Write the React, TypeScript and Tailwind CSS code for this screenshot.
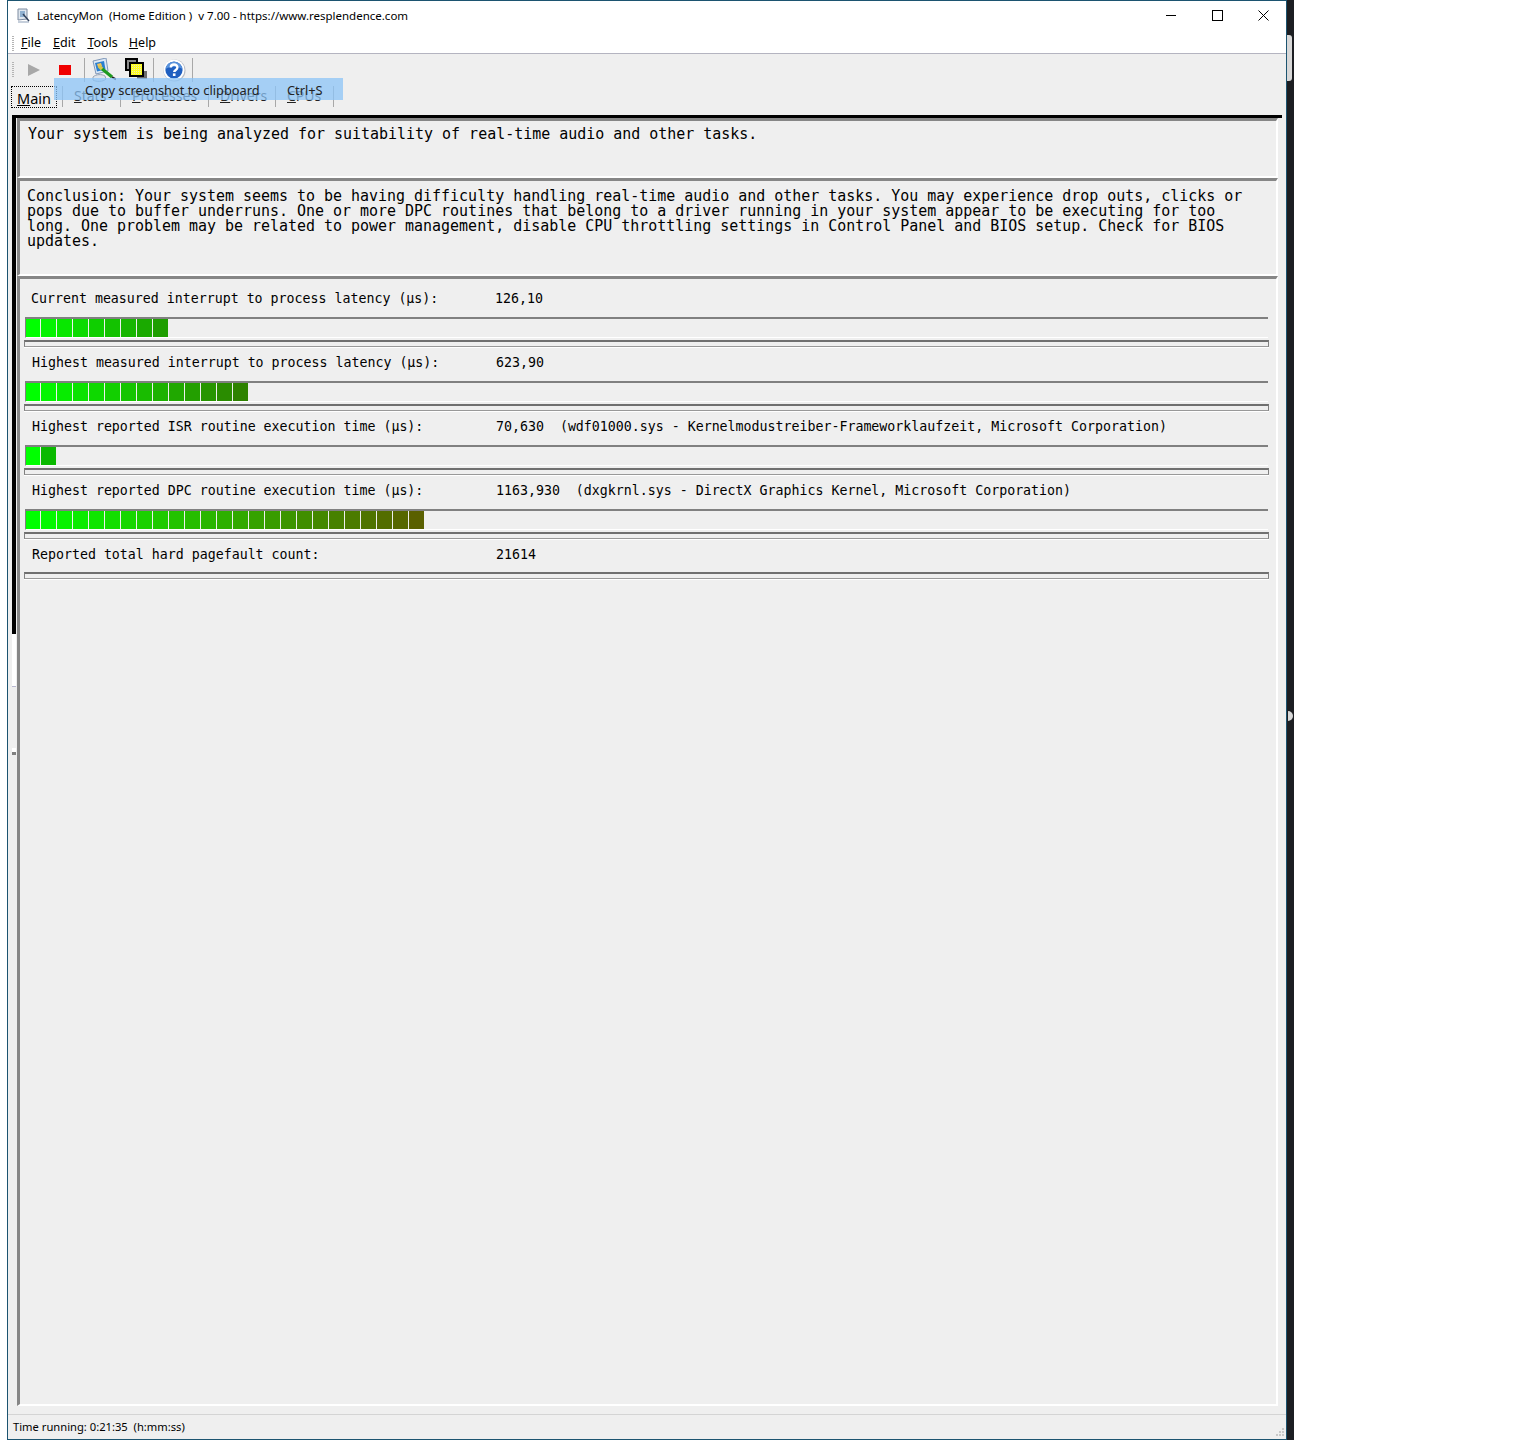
const uiFont = "font-['Noto_Sans',sans-serif]";
const monoFont = "font-['DejaVu_Sans_Mono',monospace]";

const rows = [
  { label: "Current measured interrupt to process latency (µs):", value: "126,10", count: 9, end: [30, 158], indent: "pl-[7px]" },
  { label: "Highest measured interrupt to process latency (µs):", value: "623,90", count: 14, end: [46, 130], indent: "pl-[8px]" },
  { label: "Highest reported ISR routine execution time (µs):", value: "70,630  (wdf01000.sys - Kernelmodustreiber-Frameworklaufzeit, Microsoft Corporation)", count: 2, end: [10, 185], indent: "pl-[8px]" },
  { label: "Highest reported DPC routine execution time (µs):", value: "1163,930  (dxgkrnl.sys - DirectX Graphics Kernel, Microsoft Corporation)", count: 25, end: [90, 96], indent: "pl-[8px]" },
];

function AppIcon() {
  return (
    <svg width="16" height="16" viewBox="0 0 16 16">
      <path d="M2 1l9 0 0 10-9 1z" fill="#dfe6ee" stroke="#7d8ba0" />
      <rect x="4" y="3" width="5" height="6" fill="#8fb0d0" />
      <path d="M2 13h11v2H2z" fill="#c6cfdb" />
      <path d="M7 6l6 7" stroke="#33425c" strokeWidth="1.5" />
    </svg>
  );
}

function Gripper() {
  return (
    <div className="flex flex-col gap-[1px] w-[2px] shrink-0">
      {Array.from({ length: 8 }).map((_, i) => (
        <div key={i} className="w-[2px] h-[1px] bg-[#b4b4b4]" />
      ))}
    </div>
  );
}

function ScreenshotIcon() {
  return (
    <svg width="24" height="24" viewBox="0 0 24 24">
      <path d="M1 3l13-3 2 13-12 3z" fill="#dce8f6" stroke="#7f97b8" />
      <path d="M3 5l9-2 1.5 8.5-8.500 2z" fill="#2a7fd0" />
      <path d="M5 6l4-1 1 3-4 1z" fill="#f2c45a" />
      <path d="M1 19c3-3 9-3 12-1l1 3c-3 3-10 3-13 1z" fill="#dde3ea" stroke="#98a3b2" />
      <path d="M9 10l11 9" stroke="#1e9a1e" strokeWidth="3.200" />
      <path d="M7 8l3 3" stroke="#d8c64a" strokeWidth="3.500" />
      <path d="M20 19l4 2.500" stroke="#222222" strokeWidth="2" />
    </svg>
  );
}

function CopyIcon() {
  return (
    <svg width="24" height="24" viewBox="0 0 24 24" shapeRendering="crispEdges">
      <rect x="12" y="13" width="10" height="8" fill="#6e6e6e" />
      <rect x="1" y="1" width="11" height="11" fill="#8a8a8a" stroke="#000000" strokeWidth="2" />
      <rect x="5" y="5" width="13" height="13" fill="#ffff20" stroke="#000000" strokeWidth="2" />
      <path d="M7 7h9M7 9h9M7 11h9M7 13h9M7 15h9" stroke="#e8e8b8" strokeDasharray="1 1" />
    </svg>
  );
}

function HelpIcon() {
  return (
    <svg width="24" height="24" viewBox="0 0 24 24">
      <circle cx="12.500" cy="12.500" r="11" fill="#b8bcc4" />
      <circle cx="12" cy="12" r="10.500" fill="#ffffff" />
      <circle cx="12" cy="12" r="8.600" fill="#1f5fc0" />
      <path d="M3.500 11a8.600 8.600 0 0 1 17 0c-5-3-12-3-17 0z" fill="#5a93dc" />
      <path d="M8.800 9.500c0-4 6.600-4 6.600 0 0 2.400-3.200 2.400-3.200 4.600" fill="none" stroke="#ffffff" strokeWidth="2.400" />
      <rect x="10.900" y="15.400" width="2.600" height="2.600" fill="#ffffff" />
    </svg>
  );
}

function WindowButtons() {
  return (
    <div className="ml-auto flex h-full">
      <div className="w-[46px] flex items-center justify-center">
        <svg width="11" height="11" viewBox="0 0 11 11" shapeRendering="crispEdges">
          <path d="M0 5.500h10" stroke="#000000" />
        </svg>
      </div>
      <div className="w-[46px] flex items-center justify-center">
        <svg width="11" height="11" viewBox="0 0 11 11" shapeRendering="crispEdges">
          <rect x="0.500" y="0.500" width="10" height="10" fill="none" stroke="#000000" />
        </svg>
      </div>
      <div className="w-[46px] flex items-center justify-center">
        <svg width="11" height="11" viewBox="0 0 11 11">
          <path d="M0.500 0.500l10 10M10.500 0.500l-10 10" stroke="#000000" />
        </svg>
      </div>
    </div>
  );
}

function ResizeGrip() {
  return (
    <svg width="10" height="10" viewBox="0 0 10 10" className="absolute right-[1px] bottom-[1px]">
      <path d="M7 0h2v2H7zM4 3h2v2H4zM7 3h2v2H7zM1 6h2v2H1zM4 6h2v2H4zM7 6h2v2H7z" fill="#c8c8c8" />
    </svg>
  );
}

function MeterBar({ count, end }: { count: number; end: number[] }) {
  return (
    <div className="ml-[1px] w-[1243px] h-[21px] border-t-2 border-l border-b border-t-[#808080] border-l-[#808080] border-b-white flex gap-[1px]">
      {Array.from({ length: count }).map((_, i) => {
        const t = count > 1 ? i / (count - 1) : 0;
        const r = Math.round(end[0] * t);
        const g = Math.round(255 + (end[1] - 255) * t);
        return <div key={i} className="w-[15px] first:w-[14px] h-[18px]" style={{ backgroundColor: `rgb(${r},${g},0)` }} />;
      })}
    </div>
  );
}

function EmptyBox() {
  return <div className="w-[1245px] h-[7px] border-t-2 border-x border-b border-t-[#707070] border-x-[#808080] border-b-[#999999] shadow-[0_1px_0_#ffffff]" />;
}

function MeterRow({ label, value, indent }: { label: string; value: string; indent: string }) {
  return (
    <div className={`${indent} h-[27px] pt-[1px] whitespace-pre text-[13.28px] leading-4 text-black`}>
      <span className="inline-block w-[464px]">{label}</span>
      {value}
    </div>
  );
}

export default function App() {
  return (
    <div className="flex w-[1536px] h-[1448px] bg-white overflow-hidden">
      <div className="w-[7px] shrink-0" />
      <div className={`relative w-[1280px] h-[1440px] shrink-0 flex flex-col border border-[#1c5470] bg-[#efefef] ${uiFont}`}>
        <div className="h-[31px] shrink-0 bg-white flex items-center text-[11.5px] text-black">
          <div className="ml-[8px] mr-[5px] mb-[2px]">
            <AppIcon />
          </div>
          <span className="whitespace-pre mb-[2px]">LatencyMon  (Home Edition )  v 7.00 - https://www.resplendence.com</span>
          <div className="ml-auto h-full pb-[2px] flex">
            <WindowButtons />
          </div>
        </div>

        <div className="h-[22px] shrink-0 bg-white border-b border-[#b4b4c0] flex items-center pl-[4px] pt-[2px] text-[12.5px] text-black">
          <Gripper />
          <span className="ml-[7px]"><u>F</u>ile</span>
          <span className="ml-[12px]"><u>E</u>dit</span>
          <span className="ml-[12px]"><u>T</u>ools</span>
          <span className="ml-[11px]"><u>H</u>elp</span>
        </div>

        <div className="h-[31px] shrink-0 flex items-center pl-[4px]">
          <Gripper />
          <div className="ml-[14px] w-0 h-0 border-y-[6px] border-y-transparent border-l-[12px] border-l-[#a8a8a8]" />
          <div className="ml-[19px] w-[12px] h-[10px] bg-[#f00000]" />
          <div className="ml-[13px] w-[1px] h-[24px] bg-[#a8a8a8]" />
          <div className="ml-[7px]"><ScreenshotIcon /></div>
          <div className="ml-[9px]"><CopyIcon /></div>
          <div className="ml-[4px] w-[1px] h-[24px] bg-[#a8a8a8]" />
          <div className="ml-[8px]"><HelpIcon /></div>
          <div className="ml-[6px] w-[1px] h-[24px] bg-[#a8a8a8]" />
        </div>

        <div className="h-[30px] shrink-0 pt-[1px] flex items-start pl-[3px] text-[14px] leading-[20px] text-[#222222]">
          <div className="h-[22px] w-[46px] border border-dotted border-black flex items-center justify-center pt-[1px] text-black text-[14.5px]"><span><u>M</u>ain</span></div>
          <div className="ml-[5px] h-[21px] w-[58px] border-l border-[#a8a8a8] pl-[11px]"><u>S</u>tats</div>
          <div className="h-[21px] w-[88px] border-l border-[#a8a8a8] pl-[11px]"><u>P</u>rocesses</div>
          <div className="h-[21px] w-[67px] border-l border-[#a8a8a8] pl-[11px]"><u>D</u>rivers</div>
          <div className="h-[21px] w-[59px] border-x border-[#a8a8a8] pl-[11px]"><u>C</u>PUs</div>
        </div>

        <div className="ml-[4px] mr-[4px] h-[3px] shrink-0 bg-black" />

        <div className={`ml-[4px] mr-[4px] flex flex-1 min-h-0 ${monoFont}`}>
          <div className="w-[4px] mr-[1px] shrink-0 flex flex-col mt-[-1px]">
            <div className="h-[517px] bg-black" />
            <div className="h-[53px] bg-white border-b border-[#b8b8d0]" />
            <div className="h-[61px]" />
            <div className="h-[4px] bg-white" />
            <div className="h-[3px] bg-[#808080]" />
          </div>
          <div className="w-[1261px] shrink-0 flex flex-col">
            <div className="h-[60px] shrink-0 border-t-[3px] border-l-[3px] border-t-[#868686] border-l-[#868686] border-r-2 border-b-2 border-r-white border-b-white pl-[8px] pt-[6px] text-[14.96px] leading-[15px] text-black">
              Your system is being analyzed for suitability of real-time audio and other tasks.
            </div>
            <div className="h-[98px] shrink-0 border-t-[3px] border-l-[3px] border-t-[#868686] border-l-[#868686] border-r-2 border-b-2 border-r-white border-b-white pl-[7px] pt-[8px] text-[14.96px] leading-[15px] text-black whitespace-pre">
              {"Conclusion: Your system seems to be having difficulty handling real-time audio and other tasks. You may experience drop outs, clicks or\npops due to buffer underruns. One or more DPC routines that belong to a driver running in your system appear to be executing for too\nlong. One problem may be related to power management, disable CPU throttling settings in Control Panel and BIOS setup. Check for BIOS\nupdates."}
            </div>
            <div className="h-[1130px] shrink-0 border-t-[3px] border-l-[3px] border-t-[#868686] border-l-[#868686] border-r-2 border-b-2 border-r-white border-b-white pl-[4px] pt-[11px]">
              {rows.map((row) => (
                <div key={row.label} className="h-[64px]">
                  <MeterRow label={row.label} value={row.value} indent={row.indent} />
                  <MeterBar count={row.count} end={row.end} />
                  <div className="mt-[2px]"><EmptyBox /></div>
                </div>
              ))}
              <div className="h-[26px]">
                <MeterRow label="Reported total hard pagefault count:" value="21614" indent="pl-[8px]" />
              </div>
              <EmptyBox />
            </div>
          </div>
        </div>

        <div className="h-[33px] shrink-0 flex flex-col">
          <div className="h-[8px]" />
          <div className="h-[25px] border-t border-[#d4d4d4] pl-[5px] pt-[1px] flex items-center text-[11.2px] text-black whitespace-pre">
            Time running: 0:21:35  (h:mm:ss)
          </div>
        </div>
        <ResizeGrip />

        {/* fading menu item caught mid-animation, sits over the tabs */}
        <div className="absolute left-[46px] top-[77px] w-[289px] h-[22px] pt-[4px] bg-[#8cc4f7]/75 text-[12.8px] text-[#222222] flex items-center">
          <span className="ml-[31px] w-[202px]">Copy screenshot to clipboard</span>
          <span>Ctrl+S</span>
        </div>
      </div>

      <div className="relative w-[7px] h-[1440px] shrink-0 bg-[#1c1e22]">
        <div className="absolute left-0 top-[35px] w-[5px] h-[46px] rounded-r-[3px] bg-[#d8d8d8]" />
        <div className="absolute left-[1px] top-[711px] w-[5px] h-[10px] rounded-r-[5px] bg-[#d8d8d8]" />
      </div>
    </div>
  );
}
